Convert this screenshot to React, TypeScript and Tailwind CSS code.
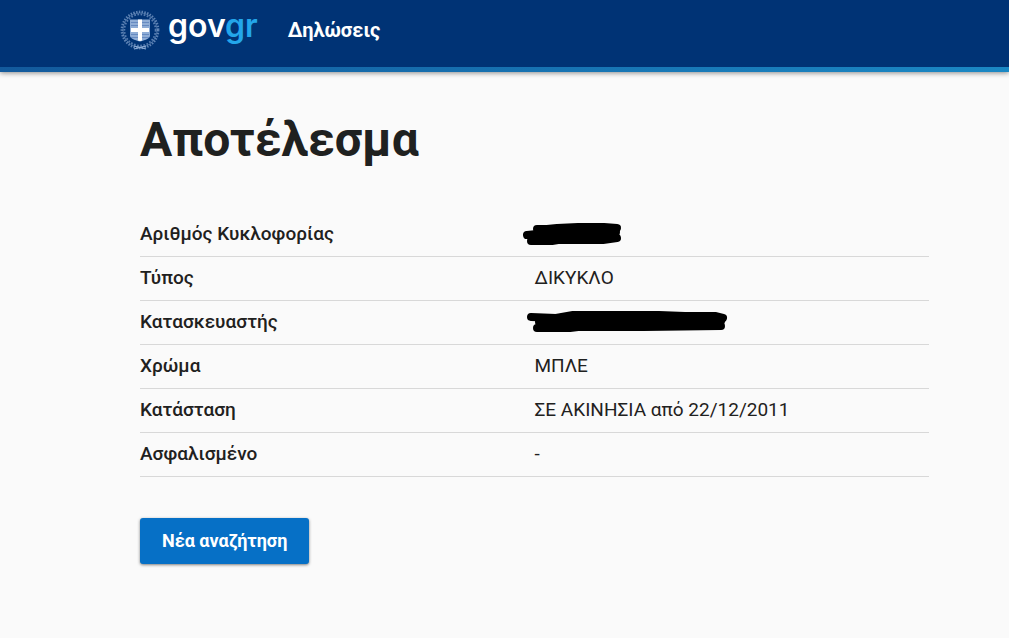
import type { ReactNode } from 'react';

interface ResultRow {
  label: string;
  value: ReactNode;
}

function Emblem() {
  return (
    <svg viewBox="0 0 40 40" className="h-10 w-10 shrink-0" aria-hidden="true">
      {/* Laurel wreath */}
      <g fill="none" stroke="#8fadd6">
        <circle cx="20" cy="20" r="18.2" strokeWidth="2.4" strokeDasharray="1.5 1.3" opacity="0.65" />
        <circle cx="20" cy="20" r="15.6" strokeWidth="1.8" strokeDasharray="1.7 1.5" opacity="0.6" />
        <circle cx="20" cy="20" r="17" strokeWidth="0.6" opacity="0.7" />
      </g>
      <path d="M14 36l12 3M26 36l-12 3" stroke="#8fadd6" strokeWidth="1.2" />
      {/* Shield */}
      <path d="M10 9.500h20v16c0 3-4 4.500-10 6-6-1.500-10-3-10-6z" fill="#8fadd6" />
      <path
        d="M11 12.500h18M11 15.500h18M11 24.500h18M11 27.500h18"
        stroke="#5c82bb"
        strokeWidth="0.8"
      />
      <path d="M18 9.500h4V18h7v4h-7v8.500l-2 0.500-2-0.500V22h-7v-4h7z" fill="#fff" />
    </svg>
  );
}

function NumberRedaction() {
  return (
    <svg viewBox="0 0 100 22" className="-ml-3 block h-[22px] w-[100px]" aria-hidden="true">
      <g fill="none" stroke="#000" strokeWidth="8" strokeLinecap="round" strokeLinejoin="round">
        <path d="M14 6h10l10-1 21-1h26l13 1" />
        <path d="M4 12l20-2 35-1 34 0" />
        <path d="M8 18h21l6-1h45l14-2" />
        <path d="M12 13h78" />
      </g>
    </svg>
  );
}

function MakerRedaction() {
  return (
    <svg viewBox="0 0 201 22" className="-ml-2 block h-[22px] w-[201px]" aria-hidden="true">
      <g fill="none" stroke="#000" strokeWidth="8" strokeLinecap="round" strokeLinejoin="round">
        <path d="M4 6l25 1 17-3h86l26 1h30l8 2" />
        <path d="M12 11l80-1h102" />
        <path d="M10 17h33l8-1h66l77-1" />
        <path d="M20 14h160" />
      </g>
    </svg>
  );
}

const rows: ResultRow[] = [
  { label: 'Αριθμός Κυκλοφορίας', value: <NumberRedaction /> },
  { label: 'Τύπος', value: 'ΔΙΚΥΚΛΟ' },
  { label: 'Κατασκευαστής', value: <MakerRedaction /> },
  { label: 'Χρώμα', value: 'ΜΠΛΕ' },
  { label: 'Κατάσταση', value: 'ΣΕ ΑΚΙΝΗΣΙΑ από 22/12/2011' },
  { label: 'Ασφαλισμένο', value: '-' },
];

function Header() {
  return (
    <header className="bg-[#003375] shadow-[0_1px_5px_rgba(0,0,0,0.45)]">
      <div className="flex h-[67px] items-center pb-2 pl-[120px] pr-20">
        <a href="#" className="flex items-center gap-2">
          <Emblem />
          <span className="pb-2 font-['Inter',sans-serif] text-[32px] leading-9 font-semibold text-white">
            gov<span className="text-[#23a6ea]">gr</span>
          </span>
        </a>
        <a href="#" className="ml-[30px] text-xl font-bold text-white">
          Δηλώσεις
        </a>
      </div>
      <div className="h-[5px] bg-gradient-to-r from-[#135a9c] to-[#1b88c4]" />
    </header>
  );
}

export default function App() {
  return (
    <div className="min-h-screen bg-[#fafafa] font-['Roboto',sans-serif] text-[#1f2120]">
      <Header />
      <main className="pt-[38px] pb-16 pl-[140px] pr-20">
        <h1 className="text-5xl leading-[60px] font-bold">Αποτέλεσμα</h1>

        <table className="mt-[42px] w-full table-fixed border-collapse text-left text-[19px]">
          <tbody>
            {rows.map((row) => (
              <tr key={row.label} className="h-11 border-b border-[#d8d8d8]">
                <th scope="row" className="w-1/2 font-medium">
                  {row.label}
                </th>
                <td>{row.value}</td>
              </tr>
            ))}
          </tbody>
        </table>

        <button
          type="button"
          className="mt-[41px] h-[46px] rounded-[3px] bg-[#0670c6] px-[22px] text-lg font-bold text-white shadow-[0_1px_3px_rgba(0,0,0,0.5)]"
        >
          Νέα αναζήτηση
        </button>
      </main>
    </div>
  );
}
